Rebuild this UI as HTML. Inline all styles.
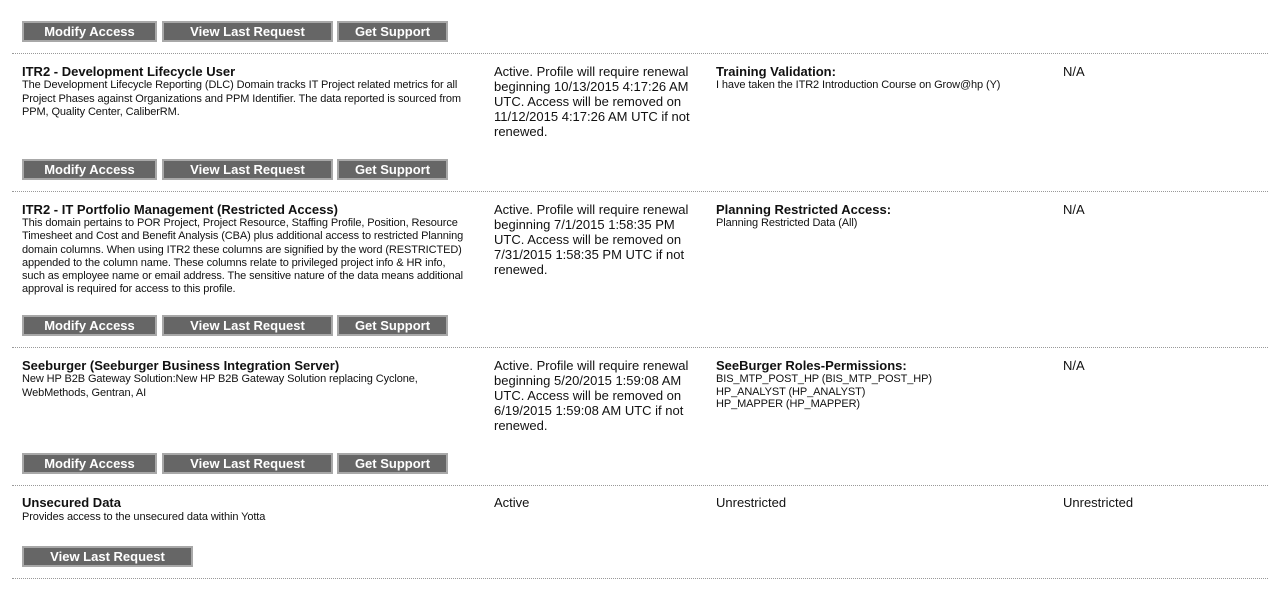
<!DOCTYPE html>
<html><head><meta charset="utf-8"><style>
body{margin:0;width:1269px;height:610px;background:#fff;font-family:"Liberation Sans",Arial,sans-serif;color:#111;position:relative;overflow:hidden}
.a{position:absolute;white-space:nowrap}
.b{position:absolute;height:17px;background:#666;border:2px solid #a8a8a8;color:#fff;font-weight:bold;font-size:13px;line-height:17px;text-align:center;box-sizing:content-box}
.hr{position:absolute;left:12px;width:1256px;border-top:1px dotted #999;height:0}
.t{font-weight:bold;font-size:13px}
.d{font-size:11px;line-height:13.5px;letter-spacing:-0.1px}
.s{font-size:13px;line-height:15px}
</style></head><body>
<div class="b" style="left:22px;top:21px;width:131px">Modify Access</div>
<div class="b" style="left:162px;top:21px;width:167px">View Last Request</div>
<div class="b" style="left:337px;top:21px;width:107px">Get Support</div>
<div class="hr" style="top:53px"></div>

<div class="a t" style="left:22px;top:64px">ITR2 - Development Lifecycle User</div>
<div class="a d" style="left:22px;top:79px">The Development Lifecycle Reporting (DLC) Domain tracks IT Project related metrics for all<br>Project Phases against Organizations and PPM Identifier. The data reported is sourced from<br>PPM, Quality Center, CaliberRM.</div>
<div class="a s" style="left:494px;top:64px">Active. Profile will require renewal<br>beginning 10/13/2015 4:17:26 AM<br>UTC. Access will be removed on<br>11/12/2015 4:17:26 AM UTC if not<br>renewed.</div>
<div class="a t" style="left:716px;top:64px">Training Validation:</div>
<div class="a d" style="left:716px;top:79px">I have taken the ITR2 Introduction Course on Grow@hp (Y)</div>
<div class="a s" style="left:1063px;top:64px">N/A</div>
<div class="b" style="left:22px;top:159px;width:131px">Modify Access</div>
<div class="b" style="left:162px;top:159px;width:167px">View Last Request</div>
<div class="b" style="left:337px;top:159px;width:107px">Get Support</div>
<div class="hr" style="top:191px"></div>

<div class="a t" style="left:22px;top:202px">ITR2 - IT Portfolio Management (Restricted Access)</div>
<div class="a d" style="left:22px;top:217px;line-height:13.3px">This domain pertains to POR Project, Project Resource, Staffing Profile, Position, Resource<br>Timesheet and Cost and Benefit Analysis (CBA) plus additional access to restricted Planning<br>domain columns. When using ITR2 these columns are signified by the word (RESTRICTED)<br>appended to the column name. These columns relate to privileged project info &amp; HR info,<br>such as employee name or email address. The sensitive nature of the data means additional<br>approval is required for access to this profile.</div>
<div class="a s" style="left:494px;top:202px">Active. Profile will require renewal<br>beginning 7/1/2015 1:58:35 PM<br>UTC. Access will be removed on<br>7/31/2015 1:58:35 PM UTC if not<br>renewed.</div>
<div class="a t" style="left:716px;top:202px">Planning Restricted Access:</div>
<div class="a d" style="left:716px;top:217px">Planning Restricted Data (All)</div>
<div class="a s" style="left:1063px;top:202px">N/A</div>
<div class="b" style="left:22px;top:315px;width:131px">Modify Access</div>
<div class="b" style="left:162px;top:315px;width:167px">View Last Request</div>
<div class="b" style="left:337px;top:315px;width:107px">Get Support</div>
<div class="hr" style="top:347px"></div>

<div class="a t" style="left:22px;top:358px">Seeburger (Seeburger Business Integration Server)</div>
<div class="a d" style="left:22px;top:373px">New HP B2B Gateway Solution:New HP B2B Gateway Solution replacing Cyclone,<br>WebMethods, Gentran, AI</div>
<div class="a s" style="left:494px;top:358px">Active. Profile will require renewal<br>beginning 5/20/2015 1:59:08 AM<br>UTC. Access will be removed on<br>6/19/2015 1:59:08 AM UTC if not<br>renewed.</div>
<div class="a t" style="left:716px;top:358px">SeeBurger Roles-Permissions:</div>
<div class="a d" style="left:716px;top:373px;line-height:12.5px">BIS_MTP_POST_HP (BIS_MTP_POST_HP)<br>HP_ANALYST (HP_ANALYST)<br>HP_MAPPER (HP_MAPPER)</div>
<div class="a s" style="left:1063px;top:358px">N/A</div>
<div class="b" style="left:22px;top:453px;width:131px">Modify Access</div>
<div class="b" style="left:162px;top:453px;width:167px">View Last Request</div>
<div class="b" style="left:337px;top:453px;width:107px">Get Support</div>
<div class="hr" style="top:485px"></div>

<div class="a t" style="left:22px;top:495px">Unsecured Data</div>
<div class="a d" style="left:22px;top:511px">Provides access to the unsecured data within Yotta</div>
<div class="a s" style="left:494px;top:495px">Active</div>
<div class="a s" style="left:716px;top:495px">Unrestricted</div>
<div class="a s" style="left:1063px;top:495px">Unrestricted</div>
<div class="b" style="left:22px;top:546px;width:167px">View Last Request</div>
<div class="hr" style="top:578px"></div>
</body></html>
